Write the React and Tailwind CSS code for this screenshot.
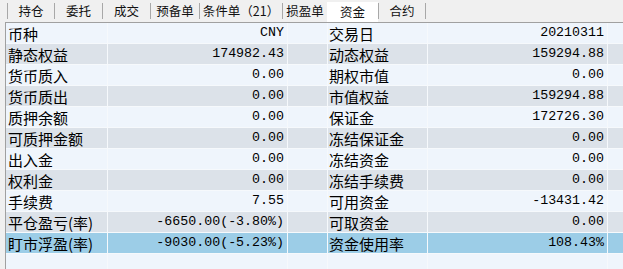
import React from 'react';

const tabs = [
    { name: '持仓', w: 'w-[47px]' },
    { name: '委托', w: 'w-[48px]' },
    { name: '成交', w: 'w-[48px]' },
    { name: '预备单', w: 'w-[49px]' },
    { name: '条件单（21）', w: 'w-[83px]' },
    { name: '损盈单', w: 'w-[45px]' },
    { name: '资金', w: 'w-[51px]', active: true },
    { name: '合约', w: 'w-[48px]' },
];

const rows = [
    ['币种', 'CNY', '交易日', '20210311'],
    ['静态权益', '174982.43', '动态权益', '159294.88'],
    ['货币质入', '0.00', '期权市值', '0.00'],
    ['货币质出', '0.00', '市值权益', '159294.88'],
    ['质押余额', '0.00', '保证金', '172726.30'],
    ['可质押金额', '0.00', '冻结保证金', '0.00'],
    ['出入金', '0.00', '冻结资金', '0.00'],
    ['权利金', '0.00', '冻结手续费', '0.00'],
    ['手续费', '7.55', '可用资金', '-13431.42'],
    ['平仓盈亏(率)', '-6650.00(-3.80%)', '可取资金', '0.00'],
    ['盯市浮盈(率)', '-9030.00(-5.23%)', '资金使用率', '108.43%'],
];

const cjk = "font-['Noto_Sans_CJK_SC',sans-serif]";
const mono = "font-['Liberation_Mono','Noto_Sans_CJK_SC',monospace]";

const App = () => {
    return (
        <div className={`w-[623px] h-[269px] bg-[#f0f0f0] flex flex-col overflow-hidden ${cjk}`}>
            {/* Tabs */}
            <div className="h-[22px] flex items-stretch pl-[7px] shrink-0">
                {tabs.map((t, i) => (
                    <div
                        key={i}
                        className={`${t.w} flex items-center justify-center text-[12.5px] leading-none text-[#111] ${
                            t.active ? 'bg-white mt-[2px]' : 'border-l border-[#a8a8a8] my-[3px]'
                        } ${i === tabs.length - 1 ? 'border-r' : ''}`}
                    >
                        {t.name}
                    </div>
                ))}
            </div>

            {/* Grid */}
            <div className="flex-1 ml-[5px] border-l border-t border-[#a0a0a0] bg-[#eff5fc] flex flex-col">
                {rows.map((r, i) => {
                    const bg = i === 10 ? 'bg-[#9ccde7]' : i % 2 === 0 ? 'bg-[#eff5fc]' : 'bg-[#dce2e9]';
                    return (
                        <div key={i} className={`h-[21px] flex border-b border-[#f6f9fc] ${bg} text-black`}>
                            <div className="w-[102px] border-r border-[#f6f9fc] pl-[2px] flex items-center text-[15px] leading-none whitespace-nowrap">
                                {r[0]}
                            </div>
                            <div className={`w-[180px] border-r border-[#f6f9fc] pr-[3px] flex items-center justify-end text-[13.3px] leading-none ${mono}`}>
                                {r[1]}
                            </div>
                            <div className="w-[40px] border-r border-[#f6f9fc]" />
                            <div className="w-[100px] border-r border-[#f6f9fc] pl-[1px] flex items-center text-[15px] leading-none whitespace-nowrap">
                                {r[2]}
                            </div>
                            <div className={`w-[180px] border-r border-[#f6f9fc] pr-[3px] flex items-center justify-end text-[13.3px] leading-none ${mono}`}>
                                {r[3]}
                            </div>
                            <div className="flex-1" />
                        </div>
                    );
                })}
                <div className="flex-1 flex">
                    <div className="w-[102px] border-r border-[#f6f9fc]" />
                    <div className="w-[180px] border-r border-[#f6f9fc]" />
                    <div className="w-[40px] border-r border-[#f6f9fc]" />
                    <div className="w-[100px] border-r border-[#f6f9fc]" />
                    <div className="w-[180px] border-r border-[#f6f9fc]" />
                </div>
            </div>
        </div>
    );
};

export default App;
